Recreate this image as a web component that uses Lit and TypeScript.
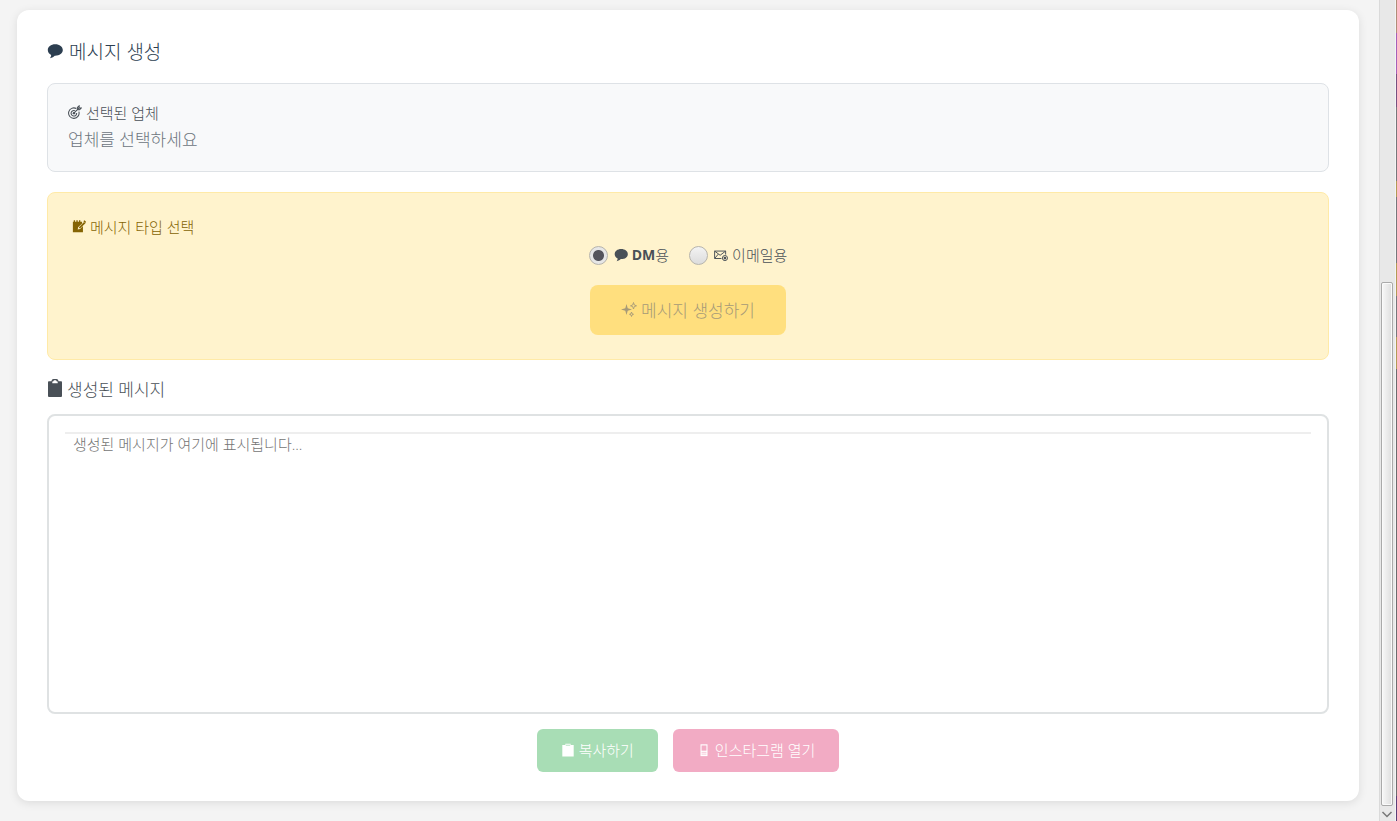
import { LitElement, html, css, svg } from "lit";
import { customElement, property, state } from "lit/decorators.js";

const glyphs = {
  speech: svg`<path d="M8.200 1.200C3.900 1.200.8 3.700.8 7c0 2.200 1.300 3.900 3.400 4.900-.1 1.400-.5 2.400-1.200 3.300 2.200-.5 3.800-1.400 4.700-2.500h.5c4.400 0 7.600-2.500 7.600-5.700S12.600 1.200 8.200 1.200z" fill="currentColor"/>`,
  target: svg`<g fill="none" stroke="currentColor" stroke-width="1.200"><path d="M9.500 4A6 6 0 1 0 12.400 7.500"/><path d="M8.300 6.700A3.200 3.200 0 1 0 9.900 9.200"/><path d="M6.800 9.300 12.500 3.600M10.700 5.400V2.900L12.700 1v2.400h2.500l-2 2z"/></g><circle cx="6.800" cy="9.300" r="1.400" fill="currentColor"/>`,
  memo: svg`<path d="M1 3h1V1.500h1.500V3h1.500V1.500h1.500V3H8V1.500h1.500V3h2v2L7 9.500 6.500 12l2.700-.5L12.500 8v7H1z" fill="currentColor"/><path d="M7.800 10.700 8.300 9l5.400-5.600 1.700 1.500L9.700 10.300z" fill="currentColor"/><path d="M13 2.500l1.200-1 2 1.800-1 1.200z" fill="currentColor"/>`,
  mail: svg`<g fill="none" stroke="currentColor" stroke-width="1.100"><path d="M8.500 12H.7V3.500h12.600V7.500M.7 3.500 7 8.300l6.300-4.800M.9 11.800l4-4.800"/><circle cx="12.500" cy="11.500" r="2.900"/></g><circle cx="12.500" cy="11.500" r="1.500" fill="currentColor"/>`,
  sparkles: svg`<path d="M5.500 3 6.700 7.300 11 8.500 6.700 9.700 5.500 14 4.300 9.700 0 8.500l4.300-1.200z" fill="currentColor"/><g fill="none" stroke="currentColor" stroke-width=".9"><path d="M12.500 1.500 13.300 4l2.200.8-2.200.8-.8 2.400-.8-2.400-2.200-.8 2.200-.8z"/><path d="M10.500 11 11 12.700l1.500.6-1.500.6-.5 1.600-.5-1.600-1.500-.6 1.500-.6z"/></g>`,
  clipboard: svg`<path d="M2 2h2.500C4.700.7 5.500 0 6.500 0h3c1 0 1.800.7 2 2H14c.6 0 1 .4 1 1v12.200c0 .5-.4.800-1 .8H2c-.6 0-1-.3-1-.8V3c0-.6.4-1 1-1z" fill="currentColor"/><path d="M5.300 2.200h.9c.2-.9.700-1.200 1.800-1.200s1.600.3 1.800 1.200h.9v1.600H5.300z" fill="#fff"/>`,
  copy: svg`<path d="M1.500 2.200H5V.8h6v1.400h3.500V15.500h-13z" fill="currentColor"/><path d="M5.500 2.500h5" stroke="#a8ddb5" stroke-width="1"/>`,
  phone: svg`<path d="M4 1.500h8v13.500H4z" fill="currentColor"/><path d="M5.200 2.800h5.600v6H5.200z" fill="#f2abc4"/><path d="M5.200 10.700h5.600M5.200 12.700h5.600" stroke="#f2abc4" stroke-width=".7"/>`,
};

@customElement("ui-icon")
class UiIcon extends LitElement {
  static styles = css`
    :host { display: inline-flex; flex: none; }
    svg { display: block; width: 100%; height: 100%; }
  `;
  @property() name: keyof typeof glyphs = "speech";
  render() {
    return html`<svg viewBox="0 0 16 16" preserveAspectRatio="none" aria-hidden="true">${glyphs[this.name]}</svg>`;
  }
}

@customElement("scroll-rail")
class ScrollRail extends LitElement {
  static styles = css`
    :host { display: flex; height: 100%; }
    .rail {
      display: flex; flex-direction: column; box-sizing: border-box;
      width: 17px; padding: 0 2px 0 1px; background: #e8e8e8;
      border-left: 1px solid #dadada; border-right: 1px solid #f4f4f4;
    }
    .before { flex: 283; }
    .thumb {
      flex: 523; box-sizing: border-box; border: 1px solid #aaa; border-radius: 2px;
      background: linear-gradient(90deg, #f8f8f8, #dedede);
      box-shadow: inset 0 0 0 1px #fafafa;
    }
    svg { display: block; width: 12px; height: 15px; }
    .edge {
      width: 1px;
      background: linear-gradient(
        #b08d78 0 4%, #a65fb8 4% 9%, #775080 9% 13%, #77777a 13% 22%,
        #b39a55 22% 24%, #77777a 24% 32%, #b39a55 32% 36%, #77777a 36% 41%,
        #b39a55 41% 45%, #6c6c6e 45% 97%, #5c3f78 97% 100%
      );
    }
  `;
  render() {
    return html`<div class="rail">
        <div class="before"></div>
        <div class="thumb"></div>
        <svg viewBox="0 0 12 15" aria-hidden="true"><path d="M1.500 6 6 10.500 10.500 6" fill="none" stroke="#777" stroke-width="1.500"/></svg>
      </div>
      <div class="edge"></div>`;
  }
}

@customElement("app-root")
class AppRoot extends LitElement {
  static styles = css`
    :host {
      display: flex; height: 100vh; overflow: hidden; background: #f4f4f4;
      color: #495057;
    }
    * { box-sizing: border-box; }
    main { flex: 1; min-width: 0; padding: 10px 20px 20px 17px; }
    .card {
      height: 100%; padding: 30px 30px 29px; display: flex; flex-direction: column;
      background: #fff; border-radius: 12px; box-shadow: 0 2px 10px rgba(0, 0, 0, 0.1);
    }
    h2, h3, h4, p { margin: 0; font-weight: 300; }
    .ko { font-family: "Open Sans", "Noto Sans CJK KR", sans-serif; font-weight: 300; }
    h2, h3, h4, .choice, button { display: flex; align-items: center; }
    h2 { gap: 6px; height: 22px; font-size: 19px; color: #2c3e50; margin-bottom: 21px; }
    h3 { gap: 4px; height: 24px; font-size: 17px; margin: 16px 0 14px; }
    h4 { gap: 4px; height: 20px; font-size: 15px; }
    .i14 { width: 14px; height: 14px; }
    .i16 { width: 16px; height: 16px; }
    .tall { width: 16px; height: 18px; }
    .picked {
      padding: 18px 20px; height: 89px; border: 1px solid #dee2e6; border-radius: 8px;
      background: #f8f9fa; margin-bottom: 20px;
    }
    .picked p { margin-top: 6px; line-height: 24px; font-size: 17px; color: #6c757d; }
    .type {
      height: 168px; padding: 23px 24px; border: 1px solid #ffeaa7; border-radius: 8px;
      background: #fff3cd;
    }
    .type h4 { color: #856404; }
    fieldset {
      border: 0; padding: 0; margin: 9px 0 20px; height: 20px;
      display: flex; justify-content: center; gap: 20px;
    }
    .choice { gap: 4px; font-size: 15px; line-height: 20px; }
    .choice b { font-weight: 700; font-size: 14px; }
    .choice span { display: flex; }
    input {
      appearance: none; width: 19px; height: 19px; margin: 0 2px 0 0; border-radius: 50%;
      border: 1px solid #b6b4ae; background: linear-gradient(#f3f3f3, #dcdcdc);
    }
    input:checked {
      background: radial-gradient(circle, #54545c 0 5px, #e6e6e6 6px);
    }
    button { justify-content: center; border: 0; border-radius: 6px; gap: 4px; }
    .make {
      margin: 0 auto; height: 50px; padding: 0 31px 2px; border-radius: 8px;
      background: #ffdf7e; color: #a69a78; font-size: 17px;
    }
    .result {
      flex: 1; min-height: 0; display: flex; padding: 16px; border: 2px solid #dfe2e3;
      border-radius: 8px;
    }
    textarea {
      flex: 1; resize: none; border: 0; border-top: 2px solid #eee; outline: 0;
      padding: 0 8px; background: transparent; font-size: 15px; line-height: 20px;
    }
    textarea::placeholder { color: #757575; opacity: 1; }
    .actions { display: flex; justify-content: center; gap: 15px; margin-top: 15px; }
    .actions button { height: 43px; padding: 0 24px 2px; color: #fff; font-size: 15px; }
    .copy { background: #a8ddb5; }
    .insta { background: #f2abc4; }
  `;

  @state() private kind = "dm";

  render() {
    return html`
      <main>
        <section class="card">
          <h2 class="ko"><ui-icon class="i16" name="speech"></ui-icon>메시지 생성</h2>
          <div class="picked">
            <h4 class="ko"><ui-icon class="i14" name="target"></ui-icon>선택된 업체</h4>
            <p class="ko">업체를 선택하세요</p>
          </div>
          <div class="type">
            <h4 class="ko"><ui-icon class="i14" name="memo"></ui-icon>메시지 타입 선택</h4>
            <fieldset aria-label="메시지 타입 선택">
              <label class="choice ko">
                <input type="radio" name="kind" .checked=${this.kind === "dm"} @change=${() => (this.kind = "dm")} />
                <ui-icon class="i14" name="speech"></ui-icon><span><b>DM</b>용</span>
              </label>
              <label class="choice ko">
                <input type="radio" name="kind" .checked=${this.kind === "mail"} @change=${() => (this.kind = "mail")} />
                <ui-icon class="i14" name="mail"></ui-icon>이메일용
              </label>
            </fieldset>
            <button class="make ko" disabled><ui-icon class="i16" name="sparkles"></ui-icon>메시지 생성하기</button>
          </div>
          <h3 class="ko"><ui-icon class="tall" name="clipboard"></ui-icon><label for="message">생성된 메시지</label></h3>
          <div class="result">
            <textarea id="message" class="ko" readonly placeholder="생성된 메시지가 여기에 표시됩니다..."></textarea>
          </div>
          <div class="actions">
            <button class="copy ko" disabled><ui-icon class="i14" name="copy"></ui-icon>복사하기</button>
            <button class="insta ko" disabled><ui-icon class="i14" name="phone"></ui-icon>인스타그램 열기</button>
          </div>
        </section>
      </main>
      <scroll-rail></scroll-rail>
    `;
  }
}
